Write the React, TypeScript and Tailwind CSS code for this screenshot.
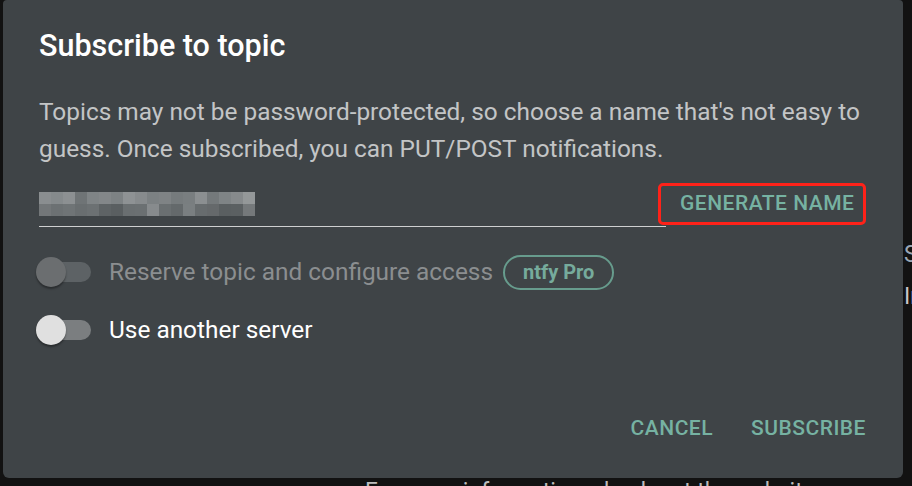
import React from 'react'

const mosaicTop = [
  'bg-[#8a8e90]', 'bg-[#858a8c]', 'bg-[#8c9092]', 'bg-[#6f7476]', 'bg-[#7f8486]', 'bg-[#838789]',
  'bg-[#7d8284]', 'bg-[#8e9294]', 'bg-[#878b8d]', 'bg-[#7c8183]', 'bg-[#7f8385]', 'bg-[#767b7d]',
  'bg-[#797e80]', 'bg-[#8b8f91]', 'bg-[#74797b]', 'bg-[#7f8486]', 'bg-[#868a8c]', 'bg-[#949899]',
]

const mosaicBottom = [
  'bg-[#737779]', 'bg-[#6c7173]', 'bg-[#6f7476]', 'bg-[#696e70]', 'bg-[#6c7173]', 'bg-[#5e6365]',
  'bg-[#5a5f61]', 'bg-[#6a6f71]', 'bg-[#6b7072]', 'bg-[#878b8d]', 'bg-[#6a6f71]', 'bg-[#64696b]',
  'bg-[#7a7f81]', 'bg-[#676c6e]', 'bg-[#65696b]', 'bg-[#5a5f61]', 'bg-[#5b6062]', 'bg-[#75797b]',
]

function Toggle({ disabled }: { disabled?: boolean }) {
  return (
    <div className="relative -ml-[3px] h-[30px] w-[56px] shrink-0">
      <div
        className={
          'absolute left-[2px] top-[5px] h-[20px] w-[53px] rounded-full ' +
          (disabled ? 'bg-[#5d6265]' : 'bg-[#7b7e80]')
        }
      />
      <div
        className={
          'absolute left-0 top-0 h-[30px] w-[30px] rounded-full shadow-[0_2px_2px_rgba(0,0,0,0.35)] ' +
          (disabled ? 'bg-[#6b6e70]' : 'bg-[#e0e0e0]')
        }
      />
    </div>
  )
}

export default function App() {
  return (
    <div className="relative h-[486px] w-[912px] overflow-hidden bg-[#121212] font-['Roboto',sans-serif]">
      {/* page behind the modal */}
      <div className="absolute left-[904px] top-[240px] text-[23px] leading-[30px] text-[#9aa6b4]">S</div>
      <div className="absolute left-[904px] top-[282px] text-[23px] leading-[30px] text-[#c8c8c8]">In</div>
      <div className="absolute left-[365px] top-[477px] text-[23px] leading-[30px] text-[#bdbdbd]">
        For more information, check out the website
      </div>

      {/* dialog */}
      <div className="relative ml-[3px] flex h-[478px] w-[900px] flex-col rounded-b-[6px] rounded-t-[4px] bg-[#3f4447] pl-[36px] pr-[37px]">
        <h2 className="mt-[26px] text-[30.5px] font-medium leading-[40px] text-white">Subscribe to topic</h2>

        <p className="mt-[27px] text-[24.4px] leading-[37px] text-[#c3c5c6]">
          Topics may not be password-protected, so choose a name that's not easy to guess. Once subscribed, you can
          PUT/POST notifications.
        </p>

        <div className="mt-[13px] flex items-center">
          <div className="flex h-[47px] w-[627px] shrink-0 flex-col justify-end border-b border-[#cfd0d1]">
            <div className="mb-[10px] flex flex-col">
              <div className="flex">
                {mosaicTop.map((c, i) => (
                  <div key={i} className={'h-[12px] w-[12px] ' + c} />
                ))}
              </div>
              <div className="flex">
                {mosaicBottom.map((c, i) => (
                  <div key={i} className={'h-[12px] w-[12px] ' + c} />
                ))}
              </div>
            </div>
          </div>
          <div className="-ml-[8px] flex h-[42px] shrink-0 items-center whitespace-nowrap rounded-[5px] border-[3px] border-[#ff2219] pl-[19px] pr-[9px]">
            <span className="text-[21px] font-medium tracking-[0.5px] text-[#76b2a2]">GENERATE NAME</span>
          </div>
        </div>

        <div className="mt-[16px] flex h-[58px] items-center">
          <Toggle disabled />
          <span className="ml-[17px] text-[24.4px] text-[#8b8e90]">Reserve topic and configure access</span>
          <span className="ml-[10px] flex h-[35px] items-center rounded-full border-[2.5px] border-[#679c8d] px-[18px] text-[20px] font-bold text-[#76ab9c]">
            ntfy Pro
          </span>
        </div>
        <div className="flex h-[58px] items-center">
          <Toggle />
          <span className="ml-[17px] text-[24.4px] text-white">Use another server</span>
        </div>

        <div className="mt-auto mb-[34px] flex justify-end gap-[38px]">
          <span className="text-[21px] font-medium tracking-[0.5px] text-[#76b2a2]">CANCEL</span>
          <span className="text-[21px] font-medium tracking-[0.5px] text-[#76b2a2]">SUBSCRIBE</span>
        </div>
      </div>
    </div>
  )
}
